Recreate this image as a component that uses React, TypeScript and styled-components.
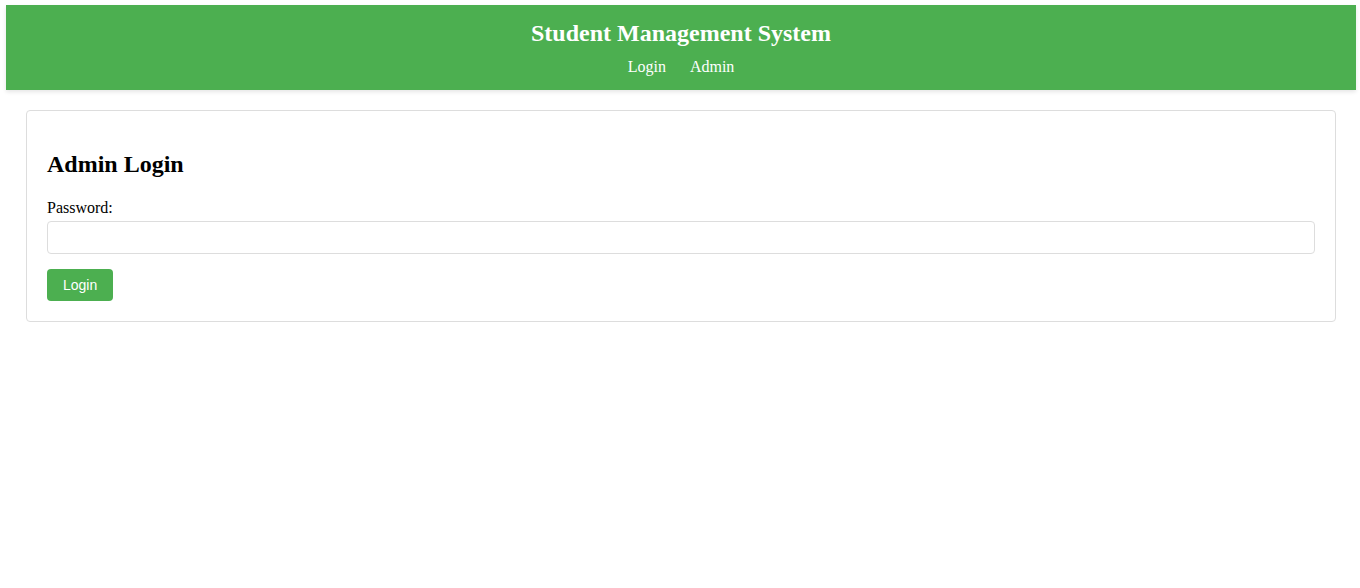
import React from "react";
import styled, { createGlobalStyle } from "styled-components";

const GlobalStyle = createGlobalStyle`
  html, body {
    margin: 0;
    padding: 0;
    background: #ffffff;
    font-family: "Liberation Serif", "Times New Roman", serif;
    color: #000;
  }
`;

const Page = styled.div`
  padding: 5px 4px 0 6px;
`;

const Header = styled.header`
  background: #4caf50;
  color: #ffffff;
  padding: 14px 20px 14px;
  text-align: center;
  box-shadow: 0 2px 4px rgba(0, 0, 0, 0.1);
`;

const Title = styled.h1`
  margin: 0;
  font-size: 24px;
  line-height: 28px;
  font-weight: bold;
`;

const Nav = styled.nav`
  margin-top: 11px;
  display: flex;
  justify-content: center;
  gap: 24px;
  font-size: 16px;
  line-height: 18px;
`;

const NavLink = styled.a`
  color: #ffffff;
  text-decoration: none;
  cursor: pointer;
`;

const Main = styled.main`
  margin: 20px;
`;

const Card = styled.section`
  border: 1px solid #dddddd;
  border-radius: 4px;
  padding: 20px;
  background: #fff;
`;

const Heading = styled.h2`
  margin: 19px 0 21px;
  font-size: 24px;
  line-height: 28px;
  font-weight: bold;
`;

const Label = styled.label`
  display: block;
  font-size: 16px;
  line-height: 18px;
`;

const Input = styled.input`
  display: block;
  box-sizing: border-box;
  width: 100%;
  height: 33px;
  margin: 4px 0 15px;
  padding: 8px;
  border: 1px solid #dddddd;
  border-radius: 4px;
  font-family: "Liberation Sans", Arial, sans-serif;
  font-size: 14px;
  outline: none;
`;

const Button = styled.button`
  display: block;
  height: 32px;
  padding: 0 16px;
  background: #4caf50;
  color: #ffffff;
  border: none;
  border-radius: 4px;
  font-family: "Liberation Sans", Arial, sans-serif;
  font-size: 14px;
  cursor: pointer;
`;

export default function App() {
  return (
    <>
      <GlobalStyle />
      <Page>
        <Header>
          <Title>Student Management System</Title>
          <Nav>
            <NavLink>Login</NavLink>
            <NavLink>Admin</NavLink>
          </Nav>
        </Header>
        <Main>
          <Card>
            <Heading>Admin Login</Heading>
            <Label htmlFor="pw">Password:</Label>
            <Input id="pw" type="password" />
            <Button>Login</Button>
          </Card>
        </Main>
      </Page>
    </>
  );
}
